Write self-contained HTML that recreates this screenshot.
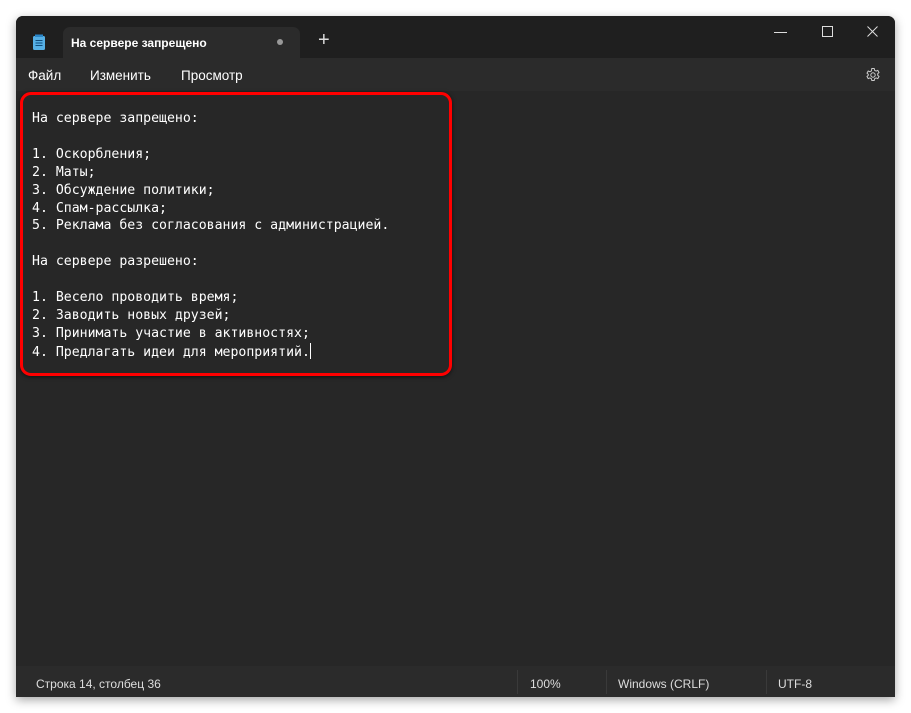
<!DOCTYPE html>
<html><head><meta charset="utf-8"><style>
body{margin:0;width:911px;height:713px;background:#fff;position:relative;overflow:hidden;font-family:"Segoe UI","Liberation Sans",sans-serif}
.win{position:absolute;left:16px;top:16px;width:879px;height:681px;background:#272727;box-shadow:0 3px 10px rgba(0,0,0,.35);border-radius:7px 7px 0 0;overflow:hidden}
.title{position:absolute;left:0;top:0;width:100%;height:42px;background:#1f1f1f}
.tab{position:absolute;left:47px;top:11px;width:237px;height:31px;background:#2b2b2b;border-radius:7px 7px 0 0;color:#fff;font-size:12px;font-weight:bold}
.menu{position:absolute;left:0;top:42px;width:100%;height:33px;background:#2b2b2b;color:#fff;font-size:13.5px}
.menu span{position:absolute;top:10px}
.ed{position:absolute;left:16px;top:94px;font-family:"DejaVu Sans Mono","Liberation Mono",monospace;font-size:13.2px;line-height:17.9px;color:#fff;white-space:pre;margin:0}
.box{position:absolute;left:20px;top:92px;width:426px;height:278px;border:3px solid #f00;border-radius:11px;box-shadow:0 1px 4px rgba(0,0,0,.6)}
.status{position:absolute;left:0;top:650px;width:100%;height:31px;background:#2b2b2b;color:#ddd;font-size:12px}
.status span{position:absolute;top:11px}
.sep{position:absolute;top:4px;width:1px;height:24px;background:#3a3a3a}
</style></head><body>
<div class="win">
<div class="title">
<svg style="position:absolute;left:16px;top:18px" width="14" height="16" viewBox="0 0 14 16"><rect x="1" y="2" width="12" height="14" rx="1.5" fill="#56b0e6"/><rect x="3" y="0.5" width="8" height="2.5" fill="#2a86c8"/><g stroke="#0f4d7d" stroke-width="1"><line x1="3.5" y1="6.5" x2="10.5" y2="6.5"/><line x1="3.5" y1="9" x2="10.5" y2="9"/><line x1="3.5" y1="11.5" x2="10.5" y2="11.5"/></g></svg>
<div class="tab"><span style="position:absolute;left:8px;top:9px">На сервере запрещено</span><span style="position:absolute;left:214px;top:12px;width:6px;height:6px;border-radius:50%;background:#999"></span></div>
<div style="position:absolute;left:302px;top:13px;color:#ddd;font-size:20px;font-weight:300">+</div>
<div style="position:absolute;left:758px;top:16px;width:13px;height:1px;background:#ddd"></div>
<div style="position:absolute;left:806px;top:10px;width:9px;height:9px;border:1px solid #ddd"></div>
<svg style="position:absolute;left:851px;top:10px" width="11" height="11"><path d="M0.5 0.5L10.5 10.5M10.5 0.5L0.5 10.5" stroke="#ddd"/></svg>
</div>
<div class="menu"><span style="left:12px">Файл</span><span style="left:74px">Изменить</span><span style="left:165px">Просмотр</span>
<svg style="position:absolute;left:849px;top:9px" width="16" height="16" viewBox="0 0 16 16"><circle cx="8" cy="8" r="2.2" fill="none" stroke="#ccc"/><path d="M6.8 1.5h2.4l.4 1.8 1.5.8 1.7-.7 1.2 2.1-1.3 1.2v1.6l1.3 1.2-1.2 2.1-1.7-.7-1.5.8-.4 1.8H6.8l-.4-1.8-1.5-.8-1.7.7-1.2-2.1 1.3-1.2V7.3L2 6.1l1.2-2.1 1.7.7 1.5-.8z" fill="none" stroke="#ccc"/></svg></div>
<pre class="ed">На сервере запрещено:

1. Оскорбления;
2. Маты;
3. Обсуждение политики;
4. Спам-рассылка;
5. Реклама без согласования с администрацией.

На сервере разрешено:

1. Весело проводить время;
2. Заводить новых друзей;
3. Принимать участие в активностях;
4. Предлагать идеи для мероприятий.<span style="display:inline-block;width:1px;height:16px;background:#fff;vertical-align:-3px"></span></pre>
<div class="status"><span style="left:20px">Строка 14, столбец 36</span><div class="sep" style="left:501px"></div><span style="left:514px">100%</span><div class="sep" style="left:590px"></div><span style="left:602px">Windows (CRLF)</span><div class="sep" style="left:750px"></div><span style="left:762px">UTF-8</span></div>
</div>
<div class="box"></div>
</body></html>
